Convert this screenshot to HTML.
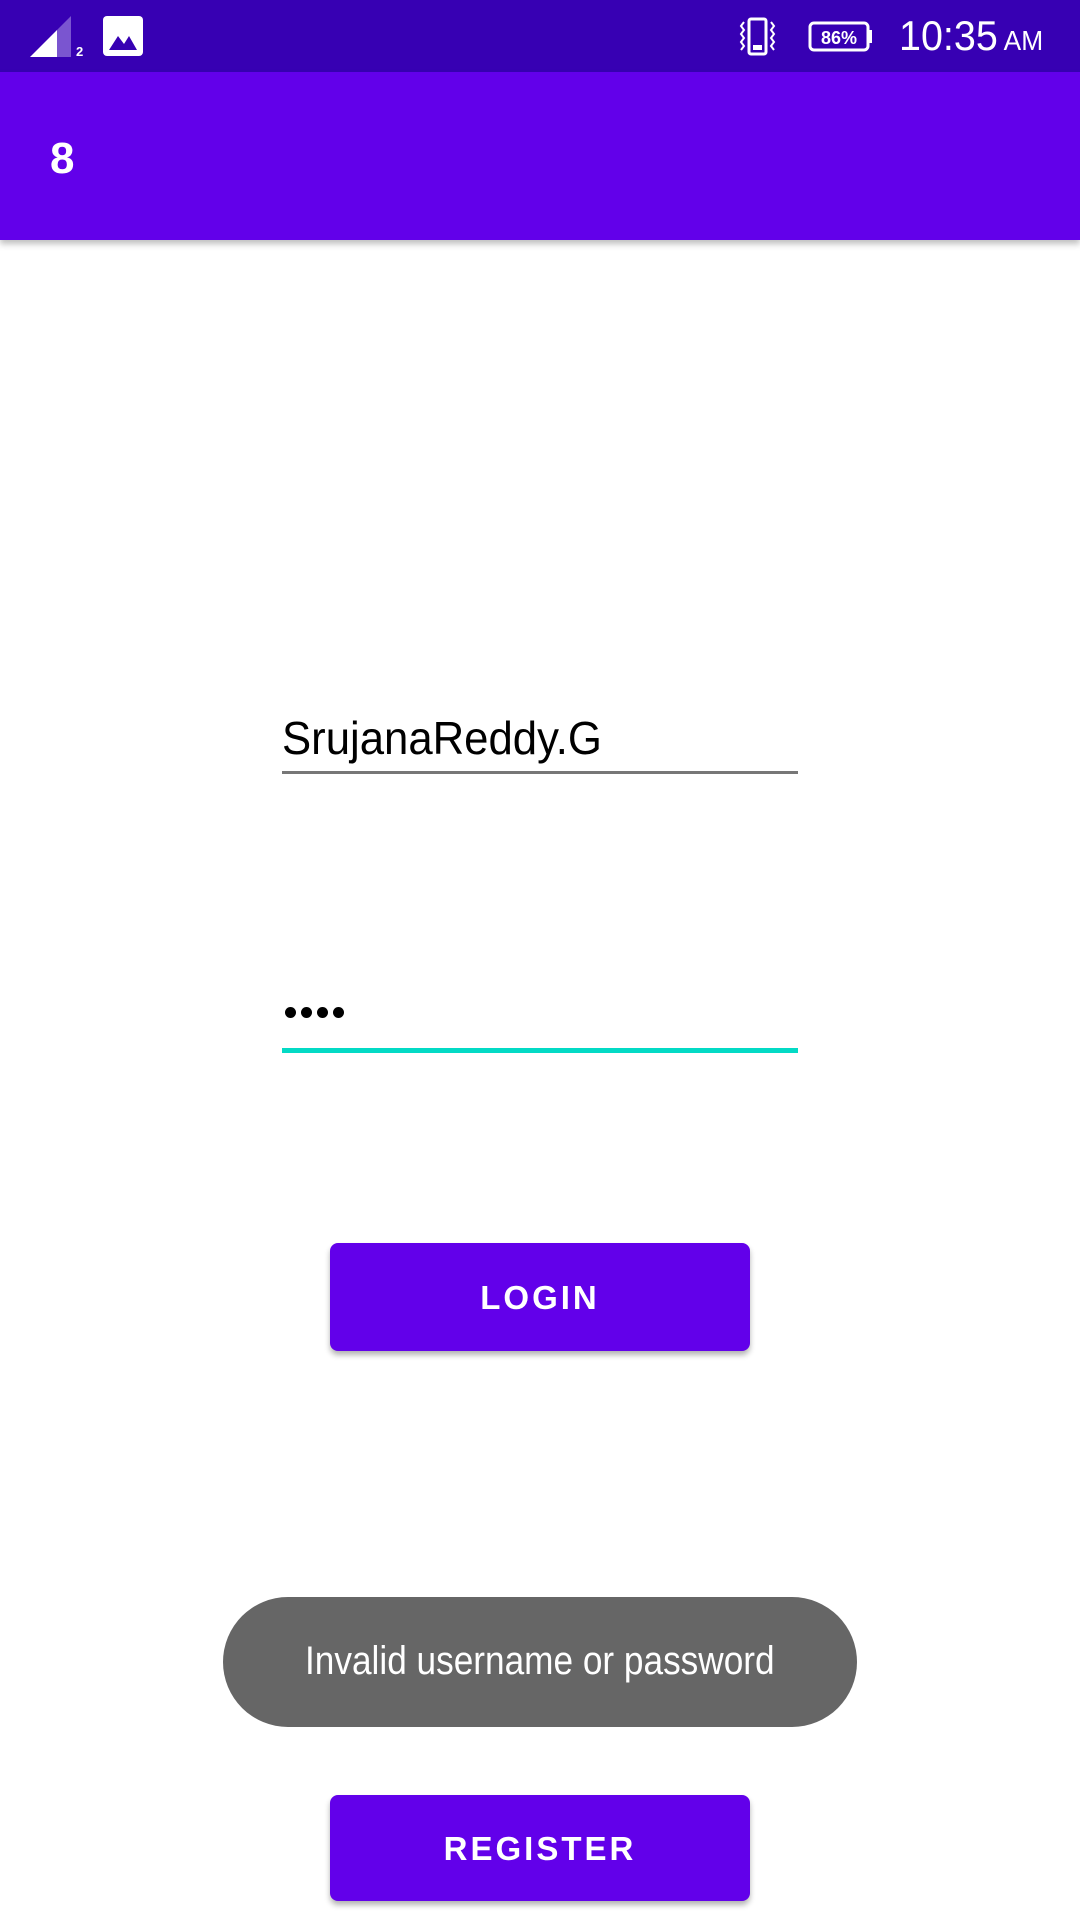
<!DOCTYPE html>
<html><head><meta charset="utf-8"><style>
*{margin:0;padding:0;box-sizing:border-box}
body{width:1080px;height:1920px;background:#fff;position:relative;overflow:hidden;font-family:"Liberation Sans",sans-serif}
.abs{position:absolute}
.btn{position:absolute;left:330px;width:420px;background:#6200ea;border-radius:8px;color:#fff;font-size:33px;font-weight:bold;letter-spacing:3px;text-align:center;box-shadow:0 4px 6px rgba(0,0,0,.3)}
</style></head><body>
<div class="abs" style="left:0;top:0;width:1080px;height:72px;background:#3700b3"></div>
<svg class="abs" style="left:28px;top:14px" width="120" height="46" viewBox="0 0 120 46">
<polygon points="2,43 29,16 29,43" fill="#fff"/>
<polygon points="29,16 43,2 43,43 29,43" fill="#7a55d0"/>
<text x="48" y="42" font-size="13" font-weight="bold" fill="#fff" font-family="Liberation Sans">2</text>
<rect x="75" y="2" width="40" height="40" rx="4" fill="#fff"/>
<polygon points="81,36 90,22 96,30 101,22 109,36" fill="#3700b3"/>
</svg>
<svg class="abs" style="left:738px;top:16px" width="150" height="42" viewBox="0 0 150 42">
<rect x="11" y="3" width="17" height="35" rx="2" fill="none" stroke="#fff" stroke-width="3"/>
<rect x="15" y="29" width="9" height="5" fill="#fff"/>
<path d="M6 6 l-3 4 3 4 -3 4 3 4 -3 4 3 4 -3 4 M33 6 l3 4 -3 4 3 4 -3 4 3 4 -3 4 3 4" stroke="#fff" stroke-width="2" fill="none"/>
<rect x="72" y="7" width="58" height="27" rx="4" fill="none" stroke="#fff" stroke-width="3"/>
<rect x="130" y="14" width="4" height="13" fill="#fff"/>
<text x="101" y="28" font-size="18" font-weight="bold" fill="#fff" text-anchor="middle" font-family="Liberation Sans">86%</text>
</svg>
<div class="abs" style="left:899px;top:12px;color:#fff;font-size:42px;transform:scaleX(.94);transform-origin:left">10:35<span style="font-size:28px"> AM</span></div>
<div class="abs" style="left:0;top:72px;width:1080px;height:168px;background:#6200ea;box-shadow:0 4px 6px rgba(0,0,0,.25)"></div>
<div class="abs" style="left:50px;top:134px;color:#fff;font-size:44px;font-weight:bold">8</div>
<div class="abs" style="left:282px;top:711px;font-size:46px;color:#000;transform:scaleX(.95);transform-origin:left">SrujanaReddy.G</div>
<div class="abs" style="left:282px;top:771px;width:516px;height:3px;background:#777"></div>
<div class="abs" style="left:285px;top:1005px;">
<span style="display:inline-block;width:11px;height:11px;border-radius:50%;background:#000;margin-right:5px"></span><span style="display:inline-block;width:11px;height:11px;border-radius:50%;background:#000;margin-right:5px"></span><span style="display:inline-block;width:11px;height:11px;border-radius:50%;background:#000;margin-right:5px"></span><span style="display:inline-block;width:11px;height:11px;border-radius:50%;background:#000"></span></div>
<div class="abs" style="left:282px;top:1048px;width:516px;height:5px;background:#03dac5"></div>
<div class="btn" style="top:1243px;height:108px;line-height:110px">LOGIN</div>
<div class="abs" style="left:223px;top:1597px;width:634px;height:130px;border-radius:65px;background:#666;color:#fff;font-size:40px;text-align:center;line-height:128px"><span style="display:inline-block;transform:scaleX(.88)">Invalid username or password</span></div>
<div class="btn" style="top:1795px;height:106px;line-height:108px">REGISTER</div>
</body></html>
